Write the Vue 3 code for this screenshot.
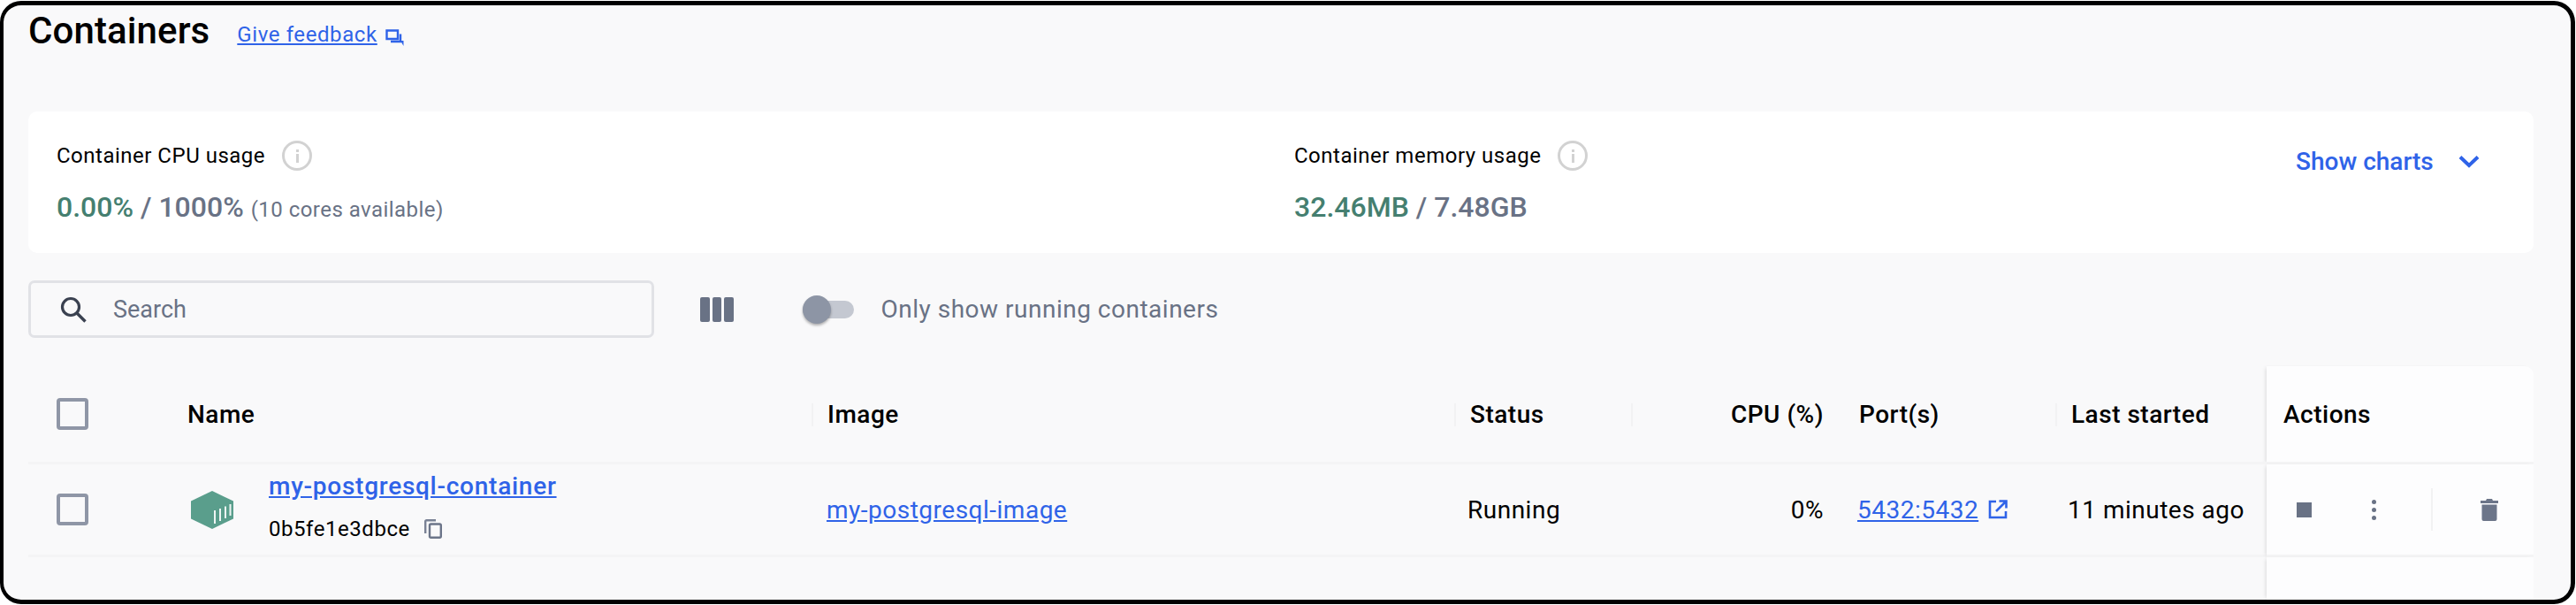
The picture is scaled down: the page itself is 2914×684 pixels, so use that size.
<template>
  <div class="frame">
    <header class="title-row">
      <h1>Containers</h1>
      <a class="feedback" href="#">Give feedback</a>
      <svg class="feedback-icon" viewBox="0 0 21 19" width="21" height="19">
        <path d="M1.500 1.500H14V11H1.500z M6 14H17V5.500" fill="none" stroke="#2f63e8" stroke-width="2.400" />
        <path d="M17 13h3.500v6z" fill="#2f63e8" />
      </svg>
    </header>

    <section class="usage-card">
      <div class="usage cpu">
        <div class="usage-label">
          Container CPU usage
          <span class="info"><b></b><i></i></span>
        </div>
        <div class="usage-value">
          <span class="green">0.00%</span> / 1000% <small>(10 cores available)</small>
        </div>
      </div>
      <div class="usage memory">
        <div class="usage-label">
          Container memory usage
          <span class="info"><b></b><i></i></span>
        </div>
        <div class="usage-value"><span class="green">32.46MB</span> / 7.48GB</div>
      </div>
      <button class="charts-btn">
        Show charts
        <svg viewBox="0 0 24 15" width="24" height="15">
          <path d="M2 2.500l10 9.500 10-9.500" fill="none" stroke="#2f63e8" stroke-width="4" />
        </svg>
      </button>
    </section>

    <section class="toolbar">
      <div class="search">
        <svg viewBox="0 0 30 30" width="30" height="30">
          <circle cx="12" cy="12" r="9.500" fill="none" stroke="#3a4150" stroke-width="3.200" />
          <path d="M19 19l9.500 9.500" stroke="#3a4150" stroke-width="3.400" />
        </svg>
        <span>Search</span>
      </div>
      <div class="columns-icon"><i></i><i></i><i></i></div>
      <div class="toggle"><i></i></div>
      <span class="toggle-label">Only show running containers</span>
    </section>

    <section class="table">
      <div class="cell head"><span class="check"></span></div>
      <div v-for="col in columns" :key="col.label" class="cell head" :class="col.cls">
        {{ col.label }}
      </div>
      <div class="cell head actions-cell actions-head">Actions</div>

      <div class="cell row"><span class="check"></span></div>
      <div class="cell row name-cell">
        <svg class="box-icon" viewBox="0 0 48 43" width="48" height="43">
          <path d="M24 0l24 11.500v20L24 43 0 31.500v-20z" fill="#5a9e8c" />
          <path d="M27 37V22M33 34V20M39 31V17.500M44.500 28V15" stroke="#fff" stroke-width="2" opacity=".9" />
        </svg>
        <div class="name-text">
          <a class="name-link" href="#">my-postgresql-container</a>
          <div class="id-line">
            <span class="id">0b5fe1e3dbce</span>
            <svg viewBox="0 0 20 22" width="20" height="22">
              <path d="M13 1.200H2.500A1.300 1.300 0 0 0 1.200 2.500V16" fill="none" stroke="#7a8295" stroke-width="2.400" />
              <rect x="6" y="5.500" width="12.800" height="15.300" rx="1.500" fill="none" stroke="#6c7589" stroke-width="2.400" />
            </svg>
          </div>
        </div>
      </div>
      <div class="cell row image-cell"><a href="#">my-postgresql-image</a></div>
      <div class="cell row status-cell">Running</div>
      <div class="cell row cpu-cell">0%</div>
      <div class="cell row port-cell">
        <a href="#">5432:5432</a>
        <svg viewBox="0 0 22 22" width="22" height="22">
          <path d="M9 2H2v18h18v-7" fill="none" stroke="#2f63e8" stroke-width="2.600" />
          <path d="M12.500 1.500h8v8M20 2L9 13" fill="none" stroke="#2f63e8" stroke-width="2.600" />
        </svg>
      </div>
      <div class="cell row last-cell">11 minutes ago</div>
      <div class="cell row actions-cell action-btns">
        <span class="stop"></span>
        <span class="kebab"><i></i><i></i><i></i></span>
        <span class="divider"></span>
        <svg viewBox="0 0 20 25" width="20" height="25">
          <path d="M7 0h6l1 2h6v3H0V2h6z" fill="#6c7589" />
          <path d="M1.500 6.500h17V23a2 2 0 0 1-2 2h-13a2 2 0 0 1-2-2z" fill="#6c7589" />
        </svg>
      </div>

      <div class="filler"></div>
      <div class="actions-cell"></div>
    </section>
  </div>
</template>

<script setup>
const columns = [
  { label: 'Name', cls: 'col-name' },
  { label: 'Image', cls: 'col-sep' },
  { label: 'Status', cls: 'col-sep' },
  { label: 'CPU (%)', cls: 'col-sep col-cpu' },
  { label: 'Port(s)', cls: 'col-port' },
  { label: 'Last started', cls: 'col-sep' }
]
</script>

<style>
html,
body {
  margin: 0;
  background: #fff;
}
</style>

<style scoped>
.frame {
  box-sizing: border-box;
  width: 2913px;
  height: 682px;
  margin-top: 1px;
  border: 5px solid #000;
  border-left-width: 4px;
  border-radius: 24px;
  background: #f9f9fa;
  padding: 0 42px 0 28px;
  display: flex;
  flex-direction: column;
  overflow: hidden;
  font-family: Roboto, sans-serif;
  color: #000;
}

.title-row {
  height: 120px;
  display: flex;
  align-items: flex-start;
  flex: none;
}

h1 {
  margin: 5px 0 0;
  font-size: 42px;
  line-height: 48px;
  font-weight: 500;
  letter-spacing: 0.1px;
}

.feedback {
  margin: 15px 0 0 31px;
  font-size: 24px;
  line-height: 36px;
  color: #2f63e8;
  letter-spacing: 0.6px;
}

.feedback-icon {
  margin: 27px 0 0 9px;
}

.usage-card {
  flex: none;
  height: 160px;
  box-sizing: border-box;
  background: #fff;
  border-radius: 10px;
  padding: 32px 0 0 32px;
  display: flex;
}

.usage.cpu {
  width: 1400px;
}

.usage.memory {
  width: 1133px;
}

.usage-label {
  display: flex;
  align-items: center;
  gap: 19px;
  height: 36px;
  font-size: 24px;
  letter-spacing: 0.5px;
}

.info {
  box-sizing: border-box;
  width: 34px;
  height: 34px;
  border: 3.500px solid #d2d2d2;
  border-radius: 50%;
  display: flex;
  flex-direction: column;
  gap: 2px;
  justify-content: center;
  align-items: center;
}

.info b {
  width: 3px;
  height: 3px;
  background: #d2d2d2;
}

.info i {
  width: 3px;
  height: 10px;
  background: #d2d2d2;
}

.usage-value {
  margin-top: 20px;
  font-size: 32px;
  line-height: 40px;
  font-weight: 500;
  color: #697285;
  white-space: nowrap;
}

.usage-value small {
  font-size: 24px;
  font-weight: 400;
  letter-spacing: 0.46px;
}

.green {
  color: #457f70;
}

.charts-btn {
  align-self: flex-start;
  margin-top: 2px;
  padding: 0;
  border: 0;
  background: none;
  display: flex;
  align-items: center;
  gap: 28px;
  height: 44px;
  font: 500 28px Roboto, sans-serif;
  color: #2f63e8;
  white-space: nowrap;
}

.toolbar {
  flex: none;
  margin-top: 31px;
  height: 65px;
  display: flex;
  align-items: center;
}

.search {
  box-sizing: border-box;
  width: 708px;
  height: 65px;
  border: 3px solid #e1e2e6;
  border-radius: 7px;
  display: flex;
  align-items: center;
  padding-left: 33px;
  gap: 30px;
  font-size: 27px;
  color: #697285;
}

.columns-icon {
  margin-left: 52px;
  display: flex;
  gap: 3px;
}

.columns-icon i {
  width: 10.500px;
  height: 28px;
  border-radius: 2px;
  background: #697285;
}

.toggle {
  margin-left: 78px;
  width: 58px;
  height: 20px;
  border-radius: 10px;
  background: #c4c8d1;
  display: flex;
  align-items: center;
}

.toggle i {
  width: 32px;
  height: 32px;
  border-radius: 50%;
  background: #8d95a5;
  box-shadow: 0 2px 3px rgba(0, 0, 0, 0.3);
}

.toggle-label {
  margin-left: 31px;
  font-size: 28px;
  color: #697285;
  letter-spacing: 0.5px;
}

.table {
  flex: 1;
  margin-top: 32px;
  display: grid;
  grid-template-columns: 160px 726px 727px 200px 238px 242px 239px 1fr;
  grid-template-rows: 111px 105px 1fr;
  font-size: 28px;
  letter-spacing: 0.5px;
}

.cell {
  box-sizing: border-box;
  display: flex;
  align-items: center;
  border-bottom: 3px solid #f4f4f5;
  white-space: nowrap;
  min-width: 0;
}

.cell:first-child,
.cell.row:nth-child(9) {
  padding-left: 32px;
}

.head {
  font-weight: 500;
  letter-spacing: 0.5px;
  font-size: 28px;
}

.col-name {
  padding-left: 20px;
}

.col-sep {
  position: relative;
  padding-left: 18px;
}

.col-sep::before {
  content: '';
  position: absolute;
  left: 0;
  top: 42px;
  width: 2px;
  height: 26px;
  background: #f2f2f3;
}

.col-cpu {
  justify-content: flex-end;
  padding-right: 20px;
}

.col-port {
  padding-left: 20px;
}

.check {
  box-sizing: border-box;
  width: 36px;
  height: 36px;
  border: 4px solid #8f96a6;
  border-radius: 4px;
}

.actions-cell {
  background: #fdfdfe;
  box-shadow: -3px 0 4px -2px rgba(0, 0, 0, 0.12);
}

.actions-head {
  padding-left: 19px;
  border-top-right-radius: 10px;
}

.name-cell {
  padding-left: 24px;
}

.box-icon {
  flex: none;
}

.name-text {
  margin-left: 40px;
}

.name-link {
  display: block;
  font-weight: 500;
  font-size: 28px;
  line-height: 36px;
  letter-spacing: 0.74px;
  color: #2f63e8;
  margin-top: -8px;
}

.id-line {
  display: flex;
  align-items: center;
  gap: 16px;
  margin-top: 15px;
}

.id {
  font-size: 24px;
  line-height: 30px;
  letter-spacing: 0.55px;
}

.image-cell {
  padding-left: 17px;
}

.image-cell a,
.port-cell a {
  color: #2f63e8;
}

.status-cell {
  padding-left: 15px;
}

.cpu-cell {
  justify-content: flex-end;
  padding-right: 20px;
}

.port-cell {
  padding-left: 18px;
  gap: 11px;
}

.last-cell {
  padding-left: 14px;
}

.action-btns {
  padding-left: 34px;
}

.stop {
  width: 17px;
  height: 17px;
  background: #697285;
}

.kebab {
  margin-left: 68px;
  display: flex;
  flex-direction: column;
  gap: 4px;
}

.kebab i {
  width: 5px;
  height: 5px;
  border-radius: 50%;
  background: #697285;
}

.divider {
  margin-left: 62px;
  width: 2px;
  height: 48px;
  background: #f2f2f3;
}

.action-btns svg {
  margin-left: 54px;
}

.filler {
  grid-column: 1 / 8;
}
</style>
